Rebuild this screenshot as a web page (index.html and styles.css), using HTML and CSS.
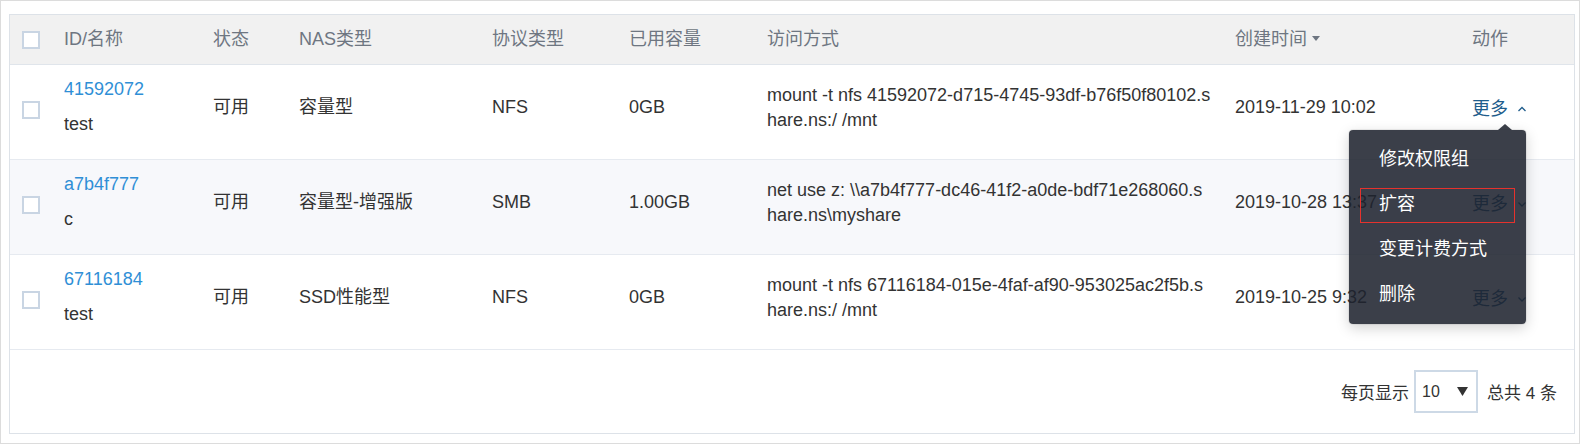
FILE: index.html
```html
<!DOCTYPE html>
<html lang="zh">
<head>
<meta charset="utf-8">
<title>NAS</title>
<link rel="stylesheet" href="styles.css">
</head>
<body>
<div class="page">
  <div class="panel">
    <table class="grid">
      <colgroup>
        <col class="c-check"><col class="c-id"><col class="c-status"><col class="c-type"><col class="c-proto"><col class="c-used"><col class="c-access"><col class="c-time"><col class="c-act">
      </colgroup>
      <thead>
        <tr>
          <th class="cell-check"><span class="checkbox"></span></th>
          <th>ID/名称</th>
          <th>状态</th>
          <th>NAS类型</th>
          <th>协议类型</th>
          <th>已用容量</th>
          <th>访问方式</th>
          <th>创建时间<svg class="caret" width="8" height="5" viewBox="0 0 8 5"><path d="M0 0h8L4 5z" fill="#6e7681"/></svg></th>
          <th>动作</th>
        </tr>
      </thead>
      <tbody>
        <tr>
          <td class="cell-check"><span class="checkbox"></span></td>
          <td><div class="idblock"><a class="link">41592072</a><div class="name">test</div></div></td>
          <td>可用</td>
          <td>容量型</td>
          <td>NFS</td>
          <td>0GB</td>
          <td class="access">mount -t nfs 41592072-d715-4745-93df-b76f50f80102.share.ns:/ /mnt</td>
          <td>2019-11-29 10:02</td>
          <td>
            <span class="more">更多<svg class="chev" width="10" height="8" viewBox="0 0 10 8"><polyline points="1.5,6 5,2.5 8.5,6" fill="none" stroke="#1f5d8c" stroke-width="1.3"/></svg>
              <div class="menu">
                <div class="menu-item">修改权限组</div>
                <div class="menu-item marked">扩容</div>
                <div class="menu-item">变更计费方式</div>
                <div class="menu-item">删除</div>
              </div>
            </span>
          </td>
        </tr>
        <tr class="hover">
          <td class="cell-check"><span class="checkbox"></span></td>
          <td><div class="idblock"><a class="link">a7b4f777</a><div class="name">c</div></div></td>
          <td>可用</td>
          <td>容量型-增强版</td>
          <td>SMB</td>
          <td>1.00GB</td>
          <td class="access">net use z: \\a7b4f777-dc46-41f2-a0de-bdf71e268060.share.ns\myshare</td>
          <td>2019-10-28 13:37</td>
          <td><span class="more">更多<svg class="chev" width="10" height="8" viewBox="0 0 10 8"><polyline points="1.5,2.5 5,6 8.5,2.5" fill="none" stroke="#1f5d8c" stroke-width="1.3"/></svg></span></td>
        </tr>
        <tr>
          <td class="cell-check"><span class="checkbox"></span></td>
          <td><div class="idblock"><a class="link">67116184</a><div class="name">test</div></div></td>
          <td>可用</td>
          <td>SSD性能型</td>
          <td>NFS</td>
          <td>0GB</td>
          <td class="access">mount -t nfs 67116184-015e-4faf-af90-953025ac2f5b.share.ns:/ /mnt</td>
          <td>2019-10-25 9:32</td>
          <td><span class="more">更多<svg class="chev" width="10" height="8" viewBox="0 0 10 8"><polyline points="1.5,2.5 5,6 8.5,2.5" fill="none" stroke="#1f5d8c" stroke-width="1.3"/></svg></span></td>
        </tr>
      </tbody>
    </table>
    <div class="footer">
      <span class="label">每页显示</span>
      <span class="select"><span class="select-value">10</span><svg width="11" height="9" viewBox="0 0 11 9"><path d="M0 0h11L5.5 9z" fill="#333"/></svg></span>
      <span class="total">总共 4 条</span>
    </div>
  </div>
</div>
</body>
</html>
```

FILE: styles.css
```css
html, body {
  margin: 0;
  padding: 0;
  background: #fff;
}

body {
  font-family: "Liberation Sans", "Noto Sans CJK SC", sans-serif;
}

.page {
  width: 1580px;
  height: 444px;
  box-sizing: border-box;
  border: 1px solid #dcdcdc;
  padding: 13px 4px 9px 8px;
}

.panel {
  height: 100%;
  box-sizing: border-box;
  border: 1px solid #dde2e8;
  display: flex;
  flex-direction: column;
}

.grid {
  width: 100%;
  border-collapse: collapse;
  table-layout: fixed;
  font-size: 18px;
  color: #333;
}

.c-check { width: 42px; }
.c-id { width: 149px; }
.c-status { width: 86px; }
.c-type { width: 193px; }
.c-proto { width: 137px; }
.c-used { width: 138px; }
.c-access { width: 468px; }
.c-time { width: 237px; }
.c-act { width: 114px; }

.grid th {
  height: 49px;
  padding: 0 12px;
  background: #f1f1f1;
  color: #6e7681;
  font-weight: normal;
  text-align: left;
  white-space: nowrap;
  border-bottom: 1px solid #e0e5eb;
  line-height: 25px;
}

.grid td {
  height: 65px;
  padding: 10px 12px 19px;
  border-bottom: 1px solid #e6eaf0;
  vertical-align: middle;
  line-height: 25px;
}

.grid td.cell-check {
  padding: 12px 0 16px 12px;
}

.grid th.cell-check {
  padding: 0 0 0 12px;
}

.hover td {
  background: #f7f8fb;
}

.checkbox {
  display: block;
  width: 18px;
  height: 18px;
  box-sizing: border-box;
  border: 2px solid #c9d5e3;
  background: #fff;
}

.caret {
  margin-left: 5px;
  vertical-align: middle;
  position: relative;
  top: -2px;
}

.idblock {
  padding-bottom: 1px;
}

.link {
  display: block;
  color: #2f8fd6;
  margin-bottom: 10px;
  text-decoration: none;
}

.access {
  word-break: break-all;
}

.more {
  position: relative;
  top: 2px;
  display: inline-block;
  color: #1f5d8c;
  white-space: nowrap;
}

.chev {
  margin-left: 9px;
  vertical-align: middle;
  position: relative;
  top: -1px;
}

.menu {
  position: absolute;
  left: -123px;
  top: 33px;
  width: 177px;
  padding: 7px 0;
  background: rgba(30, 35, 46, 0.87);
  border-radius: 4px;
  box-shadow: 0 0 0 1px rgba(0, 0, 0, 0.06), 0 4px 14px rgba(0, 0, 0, 0.18);
  z-index: 10;
}

.menu::before {
  content: "";
  position: absolute;
  left: 149px;
  top: -6px;
  border-left: 7px solid transparent;
  border-right: 7px solid transparent;
  border-bottom: 6px solid rgba(30, 35, 46, 0.87);
}

.menu-item {
  position: relative;
  height: 45px;
  line-height: 45px;
  padding-left: 30px;
  color: #fff;
  font-size: 18px;
}

.menu-item.marked::after {
  content: "";
  position: absolute;
  left: 11px;
  right: 11px;
  top: 6px;
  height: 35px;
  box-sizing: border-box;
  border: 1px solid #e5322d;
}

.footer {
  flex: 1;
  display: flex;
  justify-content: flex-end;
  align-items: center;
  padding-right: 17px;
  font-size: 17px;
  color: #333;
}

.select {
  display: flex;
  align-items: center;
  justify-content: space-between;
  box-sizing: border-box;
  width: 64px;
  height: 43px;
  margin: 0 9px 0 5px;
  padding: 0 8px 0 6px;
  border: 2px solid #cdd9e6;
  background: #fff;
}

.select-value {
  font-size: 16px;
}
```
